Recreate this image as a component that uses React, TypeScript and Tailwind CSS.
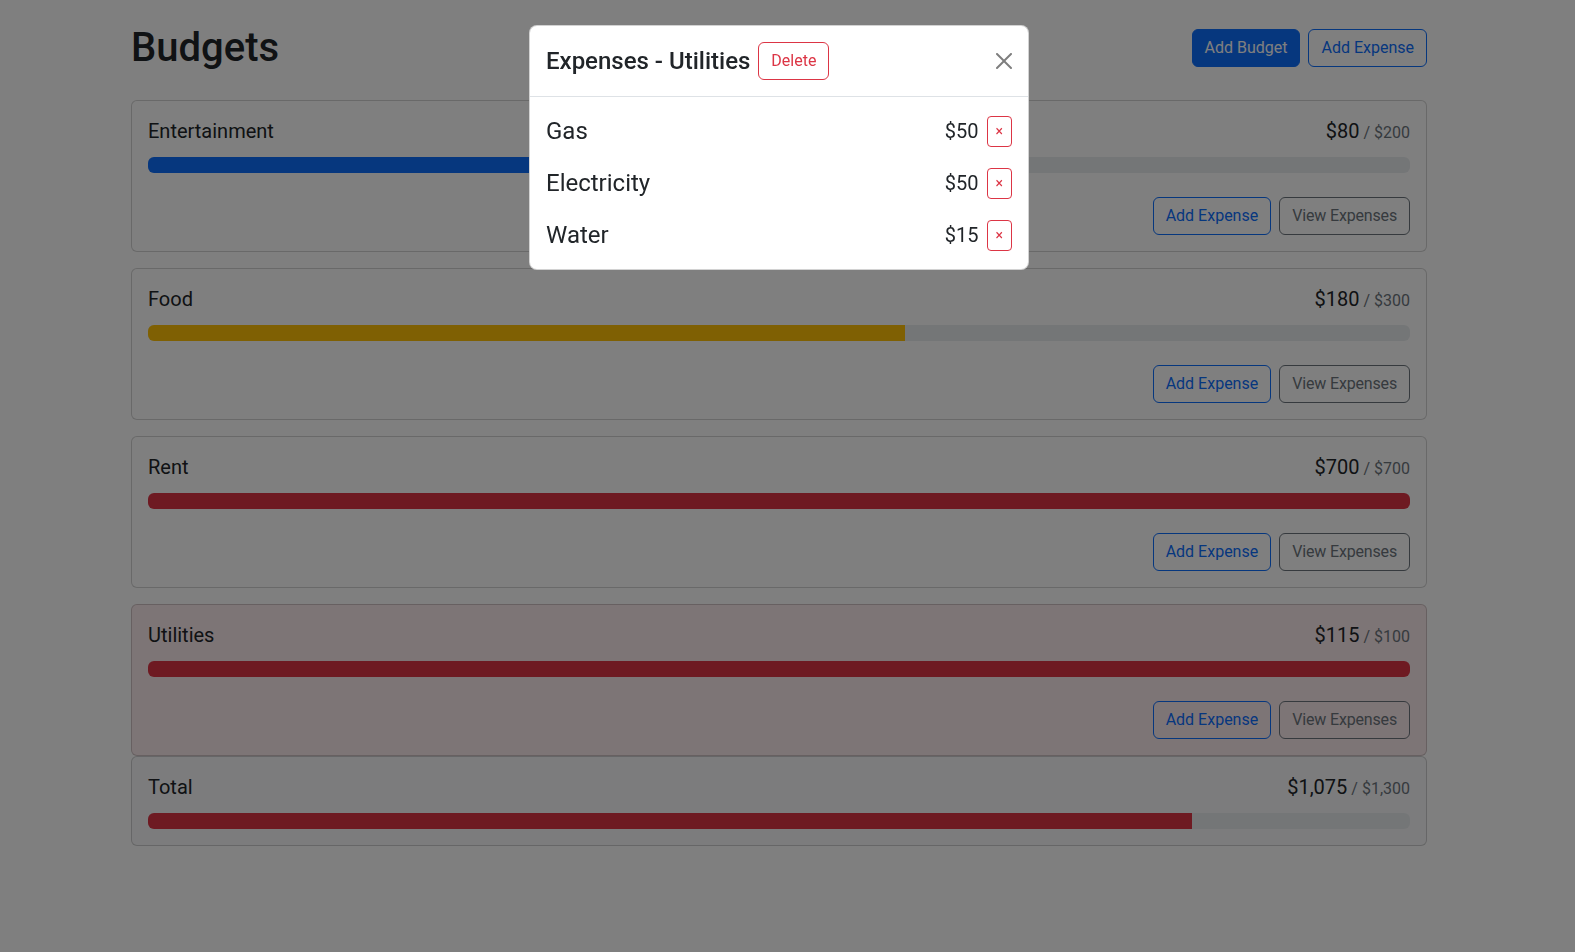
import React from 'react';

type Budget = {
  id: string;
  name: string;
  amount: number;
  max: number;
};

const budgets: Budget[] = [
  { id: 'ent', name: 'Entertainment', amount: 80, max: 200 },
  { id: 'food', name: 'Food', amount: 180, max: 300 },
  { id: 'rent', name: 'Rent', amount: 700, max: 700 },
  { id: 'util', name: 'Utilities', amount: 115, max: 100 },
];

const expenses = [
  { id: 'gas', description: 'Gas', amount: 50 },
  { id: 'elec', description: 'Electricity', amount: 50 },
  { id: 'water', description: 'Water', amount: 15 },
];

const money = (n: number) => '$' + n.toLocaleString('en-US');

function barColor(amount: number, max: number) {
  const ratio = amount / max;
  if (ratio < 0.5) return 'bg-[#0d6efd]';
  if (ratio < 0.75) return 'bg-[#ffc107]';
  return 'bg-[#dc3545]';
}

function BudgetCard({
  name,
  amount,
  max,
  gray,
  hideButtons,
}: {
  name: string;
  amount: number;
  max: number;
  gray?: boolean;
  hideButtons?: boolean;
}) {
  const over = amount > max;
  const bg = over ? 'bg-[#dc3545]/10' : gray ? 'bg-[#f8f9fa]' : 'bg-white';
  const pct = Math.min(100, (amount / max) * 100);

  return (
    <div className={`rounded-md border border-black/[0.175] ${bg}`}>
      <div className="p-4">
        <div className="mb-[14px] flex items-baseline justify-between pt-[2px]">
          <div className="mr-2 text-xl leading-[1.2]">{name}</div>
          <div className="flex items-baseline text-xl leading-[1.2]">
            {money(amount)}
            <span className="ml-1 text-base leading-[1.2] text-[#6c757d]">/ {money(max)}</span>
          </div>
        </div>
        <div className="flex h-4 overflow-hidden rounded-md bg-[#e9ecef]">
          <div className={`h-full ${barColor(amount, max)}`} style={{ width: `${pct}%` }} />
        </div>
        {!hideButtons && (
          <div className="mt-6 flex items-center justify-end gap-2">
            <button className="rounded-md border border-[#0d6efd] px-3 py-1.5 text-base leading-6 text-[#0d6efd]">
              Add Expense
            </button>
            <button className="rounded-md border border-[#6c757d] px-3 py-1.5 text-base leading-6 tracking-[-0.01em] text-[#6c757d]">
              View Expenses
            </button>
          </div>
        )}
      </div>
    </div>
  );
}

function ExpensesModal() {
  return (
    <div className="fixed inset-0 flex items-start justify-center pr-[17px]">
      <div className="mt-[25px] w-[500px] rounded-lg border border-black/[0.175] bg-white">
        <div className="flex items-center border-b border-[#dee2e6] p-4">
          <div className="flex items-center gap-2 text-2xl font-medium leading-[1.5]">
            <div>Expenses - Utilities</div>
            <button className="rounded-md border border-[#dc3545] px-3 py-1.5 text-base font-normal leading-6 text-[#dc3545]">
              Delete
            </button>
          </div>
          <button className="ml-auto h-4 w-4 opacity-50">
            <svg viewBox="0 0 16 16" className="h-4 w-4" fill="#000">
              <path d="M.293.293a1 1 0 0 1 1.414 0L8 6.586 14.293.293a1 1 0 1 1 1.414 1.414L9.414 8l6.293 6.293a1 1 0 0 1-1.414 1.414L8 9.414l-6.293 6.293a1 1 0 0 1-1.414-1.414L6.586 8 .293 1.707a1 1 0 0 1 0-1.414" />
            </svg>
          </button>
        </div>
        <div className="flex flex-col gap-4 p-4">
          {expenses.map(e => (
            <div key={e.id} className="flex items-center gap-2">
              <div className="mr-auto text-2xl leading-[1.5]">{e.description}</div>
              <div className="text-xl leading-[1.5]">{money(e.amount)}</div>
              <button className="rounded border border-[#dc3545] px-2 py-1 text-sm leading-[1.5] text-[#dc3545]">
                ×
              </button>
            </div>
          ))}
        </div>
      </div>
    </div>
  );
}

function App() {
  const totalAmount = budgets.reduce((s, b) => s + b.amount, 0);
  const totalMax = budgets.reduce((s, b) => s + b.max, 0);

  return (
    <div
      className="min-h-screen bg-white text-[#212529]"
      style={{ fontFamily: 'Roboto, "Noto Sans", "Open Sans", sans-serif' }}
    >
      <div className="pr-[17px]">
        <div className="mx-auto max-w-[1320px] px-3 pt-6">
          <div className="mb-[28px] flex h-12 items-center gap-2">
            <h1 className="mr-auto text-[40px] font-medium leading-[1.2]">Budgets</h1>
            <button className="rounded-md border border-[#0d6efd] bg-[#0d6efd] px-3 py-1.5 text-base leading-6 text-white">
              Add Budget
            </button>
            <button className="rounded-md border border-[#0d6efd] px-3 py-1.5 text-base leading-6 text-[#0d6efd]">
              Add Expense
            </button>
          </div>

          <div className="flex flex-col gap-4">
            {budgets.map(b => (
              <BudgetCard key={b.id} name={b.name} amount={b.amount} max={b.max} />
            ))}
          </div>
          <BudgetCard name="Total" amount={totalAmount} max={totalMax} gray hideButtons />
        </div>
      </div>

      {/* backdrop */}
      <div className="fixed inset-0 bg-black/50" />
      <ExpensesModal />
    </div>
  );
}

export default App;
